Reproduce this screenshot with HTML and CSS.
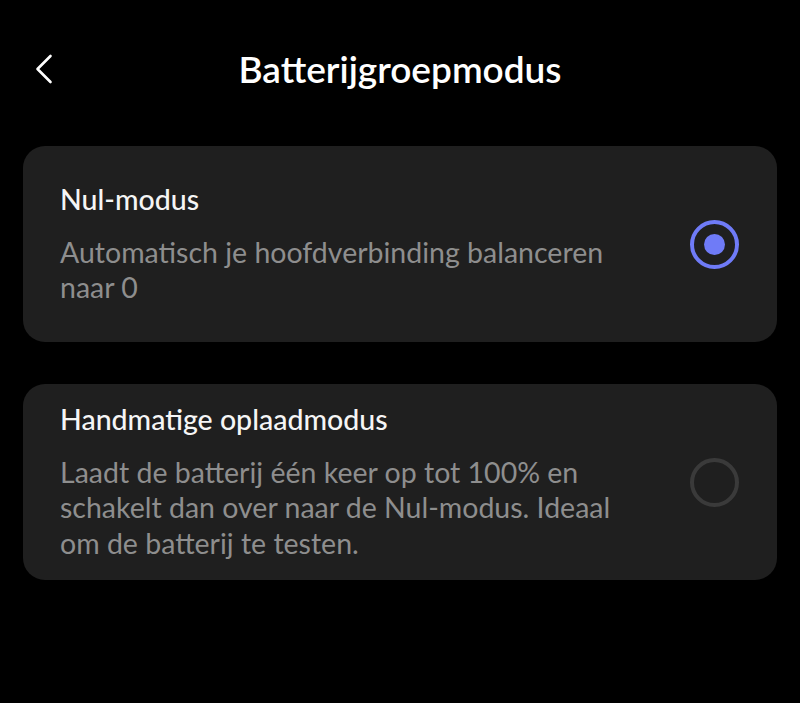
FILE: index.html
```html
<!DOCTYPE html>
<html lang="nl">
<head>
<meta charset="utf-8">
<title>Batterijgroepmodus</title>
<link rel="stylesheet" href="styles.css">
</head>
<body>
<div class="screen">
  <header class="header">
    <div class="back">
      <svg width="20" height="30" viewBox="0 0 20 30" aria-hidden="true">
        <path d="M16.5 2 L3.5 15 L16.5 28" fill="none" stroke="#ffffff" stroke-width="2.6" stroke-linecap="round" stroke-linejoin="round"/>
      </svg>
    </div>
    <h1 class="title">Batterijgroepmodus</h1>
    <div class="spacer"></div>
  </header>
  <main class="list">
    <div class="card">
      <div class="text">
        <div class="card-title">Nul-modus</div>
        <div class="card-desc">Automatisch je hoofdverbinding balanceren naar 0</div>
      </div>
      <div class="radio radio-on"><span class="dot"></span></div>
    </div>
    <div class="card">
      <div class="text">
        <div class="card-title">Handmatige oplaadmodus</div>
        <div class="card-desc">Laadt de batterij één keer op tot 100% en schakelt dan over naar de Nul-modus. Ideaal om de batterij te testen.</div>
      </div>
      <div class="radio"></div>
    </div>
  </main>
</div>
</body>
</html>
```
FILE: styles.css
```css
html, body {
  margin: 0;
  padding: 0;
  background: #000000;
}
body {
  font-family: Lato, "Open Sans", sans-serif;
  color: #f5f5f5;
}
.screen {
  width: 800px;
  height: 703px;
}
.header {
  display: grid;
  grid-template-columns: 1fr auto 1fr;
  align-items: center;
  padding: 47px 0 55px;
}
.back {
  padding-left: 34px;
  display: flex;
  align-items: center;
  height: 44px;
}
.title {
  margin: 0;
  font-size: 37px;
  line-height: 44px;
  font-weight: 600;
  color: #ffffff;
  text-align: center;
}
.list {
  display: flex;
  flex-direction: column;
  gap: 42px;
  padding: 0 23px;
}
.card {
  background: #1f1f1f;
  border-radius: 22px;
  min-height: 196px;
  box-sizing: border-box;
  padding: 16px 38px 16px 37px;
  display: flex;
  align-items: center;
  gap: 30px;
}
.text {
  flex: 1;
}
.card-title {
  font-size: 28.5px;
  line-height: 32px;
  font-weight: 500;
  color: #f5f5f5;
}
.card-desc {
  margin-top: 20px;
  font-size: 28.5px;
  line-height: 35.5px;
  color: #8e8e8e;
  max-width: 572px;
}
.radio {
  width: 49px;
  height: 49px;
  box-sizing: border-box;
  border: 4px solid #3a3a3a;
  border-radius: 50%;
  display: flex;
  align-items: center;
  justify-content: center;
  flex: none;
}
.radio-on {
  border-color: #6f7bf7;
}
.dot {
  width: 21px;
  height: 21px;
  border-radius: 50%;
  background: #6f7bf7;
}
```
